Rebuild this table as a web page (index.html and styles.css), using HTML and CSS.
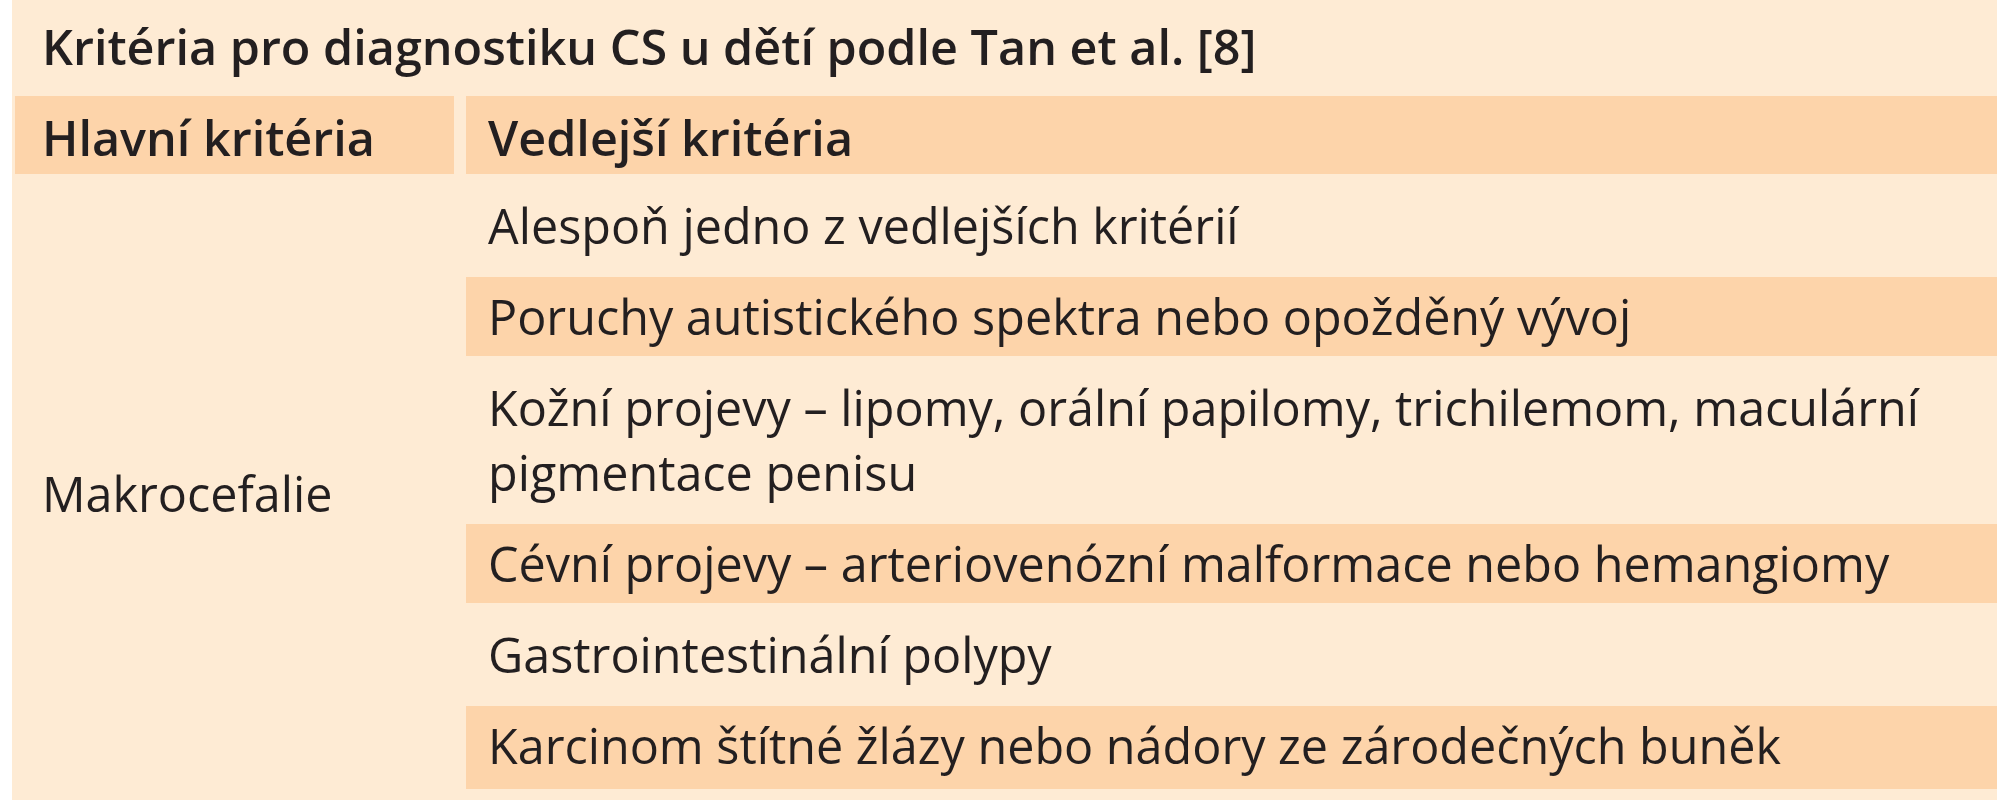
FILE: index.html
```html
<!DOCTYPE html>
<html lang="cs">
<head>
<meta charset="utf-8">
<title>Kritéria pro diagnostiku CS</title>
<link rel="stylesheet" href="styles.css">
</head>
<body>
<div class="sheet">
  <div class="caption">Kritéria pro diagnostiku CS u dětí podle Tan et al. [8]</div>
  <div class="grid">
    <div class="cell head left">Hlavní kritéria</div>
    <div class="cell head right">Vedlejší kritéria</div>
    <div class="cell major">Makrocefalie</div>
    <div class="cell right">Alespoň jedno z vedlejších kritérií</div>
    <div class="cell right shade">Poruchy autistického spektra nebo opožděný vývoj</div>
    <div class="cell right">Kožní projevy – lipomy, orální papilomy, trichilemom, maculární<br>pigmentace penisu</div>
    <div class="cell right shade">Cévní projevy – arteriovenózní malformace nebo hemangiomy</div>
    <div class="cell right">Gastrointestinální polypy</div>
    <div class="cell right shade last">Karcinom štítné žlázy nebo nádory ze zárodečných buněk</div>
  </div>
</div>
</body>
</html>
```

FILE: styles.css
```css
html, body {
  margin: 0;
  padding: 0;
  background: #ffffff;
}

.sheet {
  margin-left: 12px;
  height: 800px;
  overflow: hidden;
  background: #feebd4;
  color: #231f20;
  font-family: "Open Sans", "Liberation Sans", sans-serif;
  font-size: 48.5px;
}

.caption {
  height: 96px;
  line-height: 92px;
  padding-left: 30px;
  font-weight: 600;
  white-space: nowrap;
}

.grid {
  display: grid;
  grid-template-columns: 439px 1fr;
  column-gap: 12px;
  row-gap: 12px;
  padding-left: 3px;
}

.cell {
  line-height: 65px;
  padding-top: 7px;
  padding-bottom: 7px;
  white-space: nowrap;
}

.head {
  height: 78px;
  box-sizing: border-box;
  padding-top: 9px;
  padding-bottom: 4px;
  background: #fdd4aa;
  font-weight: 600;
}

.left {
  padding-left: 27px;
}

.right {
  padding-left: 22px;
}

.major {
  grid-row: 2 / span 6;
  grid-column: 1;
  display: flex;
  align-items: center;
  padding-left: 27px;
  padding-top: 18px;
}

.right:not(.head) {
  grid-column: 2;
}

.shade {
  background: #fdd4aa;
}

.last {
  padding-bottom: 11px;
}
```
